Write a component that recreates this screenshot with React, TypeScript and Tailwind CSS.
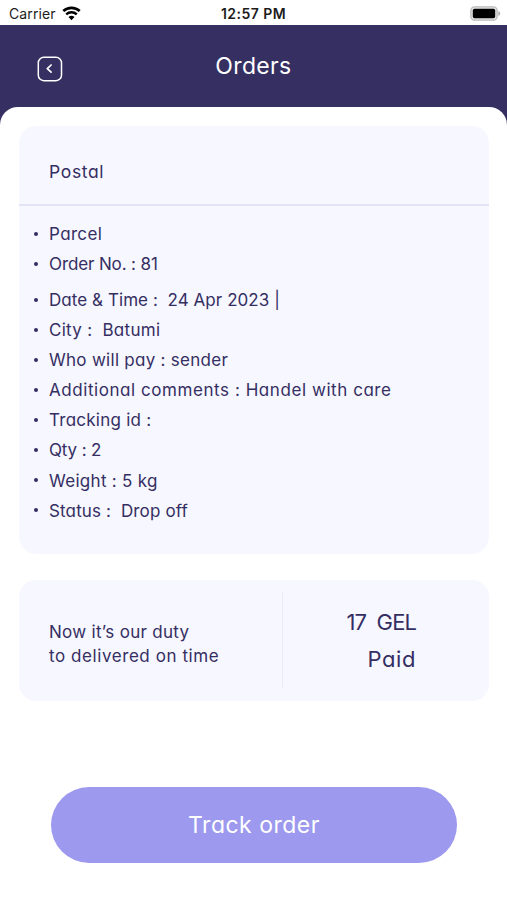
import clsx from "clsx";

interface DetailItem {
  text: string;
  className: string;
}

const DETAILS: DetailItem[] = [
  { text: "Parcel", className: "tracking-[0.36px]" },
  { text: "Order No. : 81", className: "tracking-[-0.12px] mb-[6px]" },
  { text: "Date & Time :  24 Apr 2023 |", className: "tracking-[0.06px]" },
  { text: "City :  Batumi", className: "tracking-[0.28px]" },
  { text: "Who will pay : sender", className: "tracking-[0.28px]" },
  { text: "Additional comments : Handel with care", className: "tracking-[0.56px]" },
  { text: "Tracking id :", className: "tracking-[0.25px]" },
  { text: "Qty : 2", className: "tracking-[-0.15px]" },
  { text: "Weight : 5 kg", className: "tracking-[0.3px]" },
  { text: "Status :  Drop off", className: "tracking-[0.14px]" },
];

const WifiIcon = () => (
  <svg width="19" height="15" viewBox="0 0 19 15" fill="none">
    <path d="M1.3 5.1a11.9 11.9 0 0 1 16.4 0" stroke="black" strokeWidth="2.7" />
    <path d="M4.2 8.3a7.7 7.7 0 0 1 10.6 0" stroke="black" strokeWidth="2.4" />
    <path d="M9.5 14.200 6.500 11.100a4.300 4.300 0 0 1 6 0z" fill="black" />
  </svg>
);

const BatteryIcon = () => (
  <svg width="31" height="15" viewBox="0 0 31 15" fill="none">
    <rect x="0.9" y="0.9" width="26.2" height="13.2" rx="3.6" fill="#e4e4e4" stroke="#bcbcbc" strokeWidth="1.4" />
    <rect x="2.8" y="2.8" width="22.4" height="9.4" rx="1.8" fill="black" />
    <path d="M28.300 5v5c1.200-.4 2-1.400 2-2.500s-.8-2.100-2-2.500z" fill="#b0b0b0" />
  </svg>
);

const StatusBar = () => (
  <div className="grid h-[25px] grid-cols-3 items-center bg-white text-[14px] text-[#1c1c1c] [font-feature-settings:normal]">
    <div className="flex items-center gap-[6px] pt-px pl-[9px]">
      <span className="tracking-[0.1px]">Carrier</span>
      <WifiIcon />
    </div>
    <span className="pt-[2px] text-center font-semibold tracking-[0.45px]">12:57 PM</span>
    <div className="flex justify-end pt-[1px] pr-[6px]">
      <BatteryIcon />
    </div>
  </div>
);

const Header = () => (
  <header className="grid h-[102px] grid-cols-3 items-start bg-[#362f62]">
    <button type="button" aria-label="Back" className="ml-[37px] mt-[31px] w-[26px]">
      <svg width="26" height="26" viewBox="0 0 26 26" fill="none" stroke="white">
        <rect x="1.300" y="1.300" width="23.200" height="23.400" rx="5.500" strokeWidth="1.500" />
        <path d="M14.100 9 10.300 12.600l3.800 3.600" strokeWidth="1.700" strokeLinecap="round" strokeLinejoin="round" />
      </svg>
    </button>
    <h1 className="mt-[24px] text-center text-[23px] leading-[34px] tracking-[0.35px] text-white">
      Orders
    </h1>
  </header>
);

const OrderCard = () => (
  <section className="h-[428px] rounded-[17px] bg-[#f6f7ff]">
    <h2 className="h-[80px] border-b-2 border-[#e5e4f7] pt-[31px] pl-[30px] text-[17.500px] leading-[30px] tracking-[0.65px]">
      Postal
    </h2>
    <ul className="pt-[13px] pl-[15px]">
      {DETAILS.map(({ text, className }) => (
        <li
          key={text}
          className={clsx("flex h-[30.1px] items-center whitespace-pre text-[17px]", className)}
        >
          <span className="mr-[11px] mb-px size-1 rounded-full bg-[#352e62]" />
          <span className="pt-px">{text}</span>
        </li>
      ))}
    </ul>
  </section>
);

const PaymentCard = () => (
  <section className="mt-[26px] flex h-[121px] items-center rounded-[17px] bg-[#f6f7ff]">
    <div className="flex w-[263px] flex-col pt-[7px] pl-[30px] text-[17px] leading-[24px]">
      <span className="tracking-[0.3px]">Now it’s our duty</span>
      <span className="tracking-[0.57px]">to delivered on time</span>
    </div>
    <div className="h-[97px] w-px bg-[#ececf8]" />
    <div className="flex w-[133px] flex-col items-end whitespace-pre text-[22px] leading-[37px]">
      <span className="tracking-[-0.9px]">17  GEL</span>
      <span className="tracking-[0.6px]">Paid</span>
    </div>
  </section>
);

const App = () => {
  return (
    <div className="h-[900px] w-[507px] overflow-hidden bg-white font-['Inter',sans-serif] text-[#352e62] [font-feature-settings:'cv11']">
      <StatusBar />
      <Header />
      <main className="relative -mt-5 h-[793px] rounded-t-[18px] bg-white pt-[19px] pr-[18px] pl-[19px]">
        <OrderCard />
        <PaymentCard />
        <button
          type="button"
          className="mt-[86px] ml-[32px] h-[76px] w-[406px] rounded-full bg-[#9c99ee] pt-px text-[23px] text-white"
        >
          <span className="tracking-[0.5px]">Track order</span>
        </button>
      </main>
    </div>
  );
};

export default App;
